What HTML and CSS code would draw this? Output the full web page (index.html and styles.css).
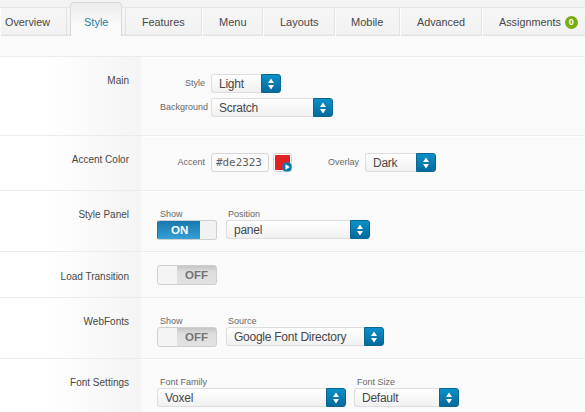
FILE: index.html
```
<!DOCTYPE html>
<html lang="en">
<head>
<meta charset="utf-8">
<title>Template settings</title>
<link rel="stylesheet" href="styles.css">
</head>
<body>
<svg width="0" height="0" class="defs">
  <symbol id="updown" viewBox="0 0 8 12"><path d="M4 0.4 7 5H1zM1 7H7L4 11.6z" fill="#fff"/></symbol>
</svg>
<nav class="tabs">
  <a class="tab overview"><span>Overview</span></a>
  <a class="tab active"><span>Style</span></a>
  <a class="tab features"><span>Features</span></a>
  <a class="tab menu"><span>Menu</span></a>
  <a class="tab layouts"><span>Layouts</span></a>
  <a class="tab mobile"><span>Mobile</span></a>
  <a class="tab advanced"><span>Advanced</span></a>
  <a class="tab assignments"><span>Assignments</span><b class="count">0</b></a>
</nav>
<main class="settings">
  <section class="row main">
    <h2>Main</h2>
    <div class="fields stacked">
      <div class="line"><label class="wide">Style</label><div class="select w70"><span>Light</span><i><svg><use href="#updown"/></svg></i></div></div>
      <div class="line"><label class="wide flush">Background</label><div class="select w122"><span>Scratch</span><i><svg><use href="#updown"/></svg></i></div></div>
    </div>
  </section>
  <section class="row accent">
    <h2>Accent Color</h2>
    <div class="fields">
      <div class="line"><label class="wide">Accent</label><div class="hex">#de2323</div>
        <div class="swatch"><svg class="play" viewBox="0 0 10 10"><rect x="0.5" y="0.5" width="9" height="9" rx="3.5" fill="#087bb0"/><path d="M3.5 2.2 7.8 5 3.5 7.8z" fill="#fff"/></svg></div>
        <label class="overlay">Overlay</label><div class="select w71"><span>Dark</span><i><svg><use href="#updown"/></svg></i></div></div>
    </div>
  </section>
  <section class="row panel">
    <h2>Style Panel</h2>
    <div class="fields">
      <div class="field first"><label>Show</label><div class="toggle on"><span>ON</span></div></div>
      <div class="field"><label class="near">Position</label><div class="select w144"><span>panel</span><i><svg><use href="#updown"/></svg></i></div></div>
    </div>
  </section>
  <section class="row transition">
    <h2>Load Transition</h2>
    <div class="fields"><div class="toggle off"><span>OFF</span></div></div>
  </section>
  <section class="row webfonts">
    <h2>WebFonts</h2>
    <div class="fields">
      <div class="field first"><label>Show</label><div class="toggle off"><span>OFF</span></div></div>
      <div class="field"><label class="near">Source</label><div class="select w158"><span>Google Font Directory</span><i><svg><use href="#updown"/></svg></i></div></div>
    </div>
  </section>
  <section class="row fonts">
    <h2>Font Settings</h2>
    <div class="fields">
      <div class="field"><label>Font Family</label><div class="select w189"><span>Voxel</span><i><svg><use href="#updown"/></svg></i></div></div>
      <div class="field"><label>Font Size</label><div class="select w105"><span>Default</span><i><svg><use href="#updown"/></svg></i></div></div>
    </div>
  </section>
</main>
</body>
</html>
```
FILE: styles.css
```
* { box-sizing: border-box; }
body {
  margin: 0;
  width: 585px;
  height: 412px;
  overflow: hidden;
  background: #fafafa;
  color: #484848;
  font-family: "Liberation Sans", Arial, sans-serif;
}
.defs { display: block; }
.tabs {
  display: flex;
  align-items: flex-end;
  height: 36px;
  background: linear-gradient(#f3f3f3 0 7px, #e6e6e6 7px 8px, #f6f6f6 8px, #f2f2f2 34px, #e3e3e3 35px);
  font-size: 11px;
}
.tab {
  display: flex;
  align-items: center;
  height: 28px;
  padding-left: 16px;
  border-left: 1px solid #fdfdfd;
  border-right: 1px solid #e2e2e2;
  white-space: nowrap;
}
.tab.overview { width: 67px; padding-left: 4px; font-size: 10.8px; }
.tab.active {
  width: 52px;
  height: 34px;
  margin: 0 3px;
  padding: 4px 0 0 13px;
  border: 1px solid #d9d9d9;
  border-bottom: 0;
  border-radius: 4px 4px 0 0;
  background: linear-gradient(#ececec, #fafafa 22px);
  color: #2180aa;
}
.tab.features { width: 77px; border-left-color: #e2e2e2; font-size: 10.8px; }
.tab.menu { width: 61px; }
.tab.layouts { width: 72px; }
.tab.mobile { width: 65px; padding-left: 15px; }
.tab.advanced { width: 82px; font-size: 10.8px; }
.tab.assignments { flex: 1; border-right: 0; font-size: 10.8px; }
.count {
  width: 13px;
  height: 13px;
  margin-left: 4px;
  border-radius: 50%;
  background: #77ad13;
  color: #fff;
  font-size: 9px;
  line-height: 13px;
  text-align: center;
}
.settings { padding-top: 20px; }
.row {
  display: flex;
  border-top: 1px solid #ececec;
  box-shadow: inset 0 1px #fff;
}
.row.main { height: 79px; }
.row.accent { height: 55px; }
.row.panel { height: 61px; }
.row.transition { height: 46px; }
.row.webfonts { height: 61px; }
.row.fonts { height: 61px; }
h2 {
  width: 141px;
  margin: 0;
  padding: 17px 12px 0 0;
  background: linear-gradient(90deg, #fff 45px, #f4f4f4);
  font-size: 10px;
  font-weight: 400;
  line-height: 14px;
  text-align: right;
}
.row.transition h2 { padding-top: 18px; }
.fields { display: flex; padding: 17px 0 0 16px; }
.stacked { flex-direction: column; gap: 5px; }
.transition .fields { padding-top: 13px; }
.line { display: flex; align-items: center; height: 19px; }
label {
  color: #686868;
  font-size: 9px;
  line-height: 11px;
  white-space: nowrap;
}
label.wide { width: 54px; padding-right: 6px; text-align: right; }
label.flush { padding-right: 3px; }
label.overlay { width: 73px; padding-right: 6px; text-align: right; }
.field { display: flex; flex-direction: column; margin-right: 8px; }
.field.first { margin-right: 9px; }
.field label { height: 12px; padding-left: 3px; line-height: 13px; }
.field label.near { padding-left: 2px; }
.select {
  display: flex;
  height: 19px;
  border: 1px solid #dedede;
  border-right: 0;
  border-radius: 3px;
  background: linear-gradient(#fff, #f0f0f0);
  color: #484848;
  font-size: 12px;
  letter-spacing: -0.25px;
  line-height: 18px;
}
.select span { flex: 1; padding-left: 7px; white-space: nowrap; }
.select i {
  display: flex;
  align-items: center;
  justify-content: center;
  width: 20px;
  height: 19px;
  margin-top: -1px;
  border: 1px solid #08678f;
  border-radius: 0 3px 3px 0;
  background: linear-gradient(#0b90c9, #046a9c);
}
.select svg { width: 8px; height: 12px; }
.w70 { width: 70px; }
.w71 { width: 71px; }
.w105 { width: 105px; }
.w122 { width: 122px; }
.w144 { width: 144px; }
.w158 { width: 158px; }
.w189 { width: 189px; }
.hex {
  width: 58px;
  height: 19px;
  padding-left: 4px;
  border: 1px solid #d6d6d6;
  border-radius: 3px;
  color: #606060;
  font: 10.9px/18px "DejaVu Sans Mono", monospace;
}
.swatch {
  position: relative;
  width: 19px;
  height: 19px;
  margin-left: 4px;
  border: 1px solid #d5d5d5;
  border-radius: 3px;
}
.swatch::before {
  content: "";
  display: block;
  width: 15px;
  height: 15px;
  margin: 1px;
  border-radius: 1px;
  background: #e02224;
}
.play { position: absolute; right: -1px; bottom: -1px; width: 10px; height: 10px; }
.toggle {
  display: flex;
  width: 60px;
  height: 20px;
  border: 1px solid #cfcfcf;
  border-radius: 3px;
  font-size: 11.5px;
  font-weight: 700;
  line-height: 18px;
}
.toggle.on {
  border-color: #cfcfcf #cfcfcf #cfcfcf #1a76a8;
  background: linear-gradient(90deg, transparent 42px, #f2f2f2 42px), linear-gradient(#1878ad, #36a0d5);
  color: #fff;
}
.toggle.on span { padding-left: 13px; }
.toggle.off { background: linear-gradient(90deg, #f4f4f4 19px, transparent 19px), linear-gradient(#c5c5c5, #dedede 6px, #e2e2e2); color: #747474; }
.toggle.off span { padding-left: 27px; }
```
